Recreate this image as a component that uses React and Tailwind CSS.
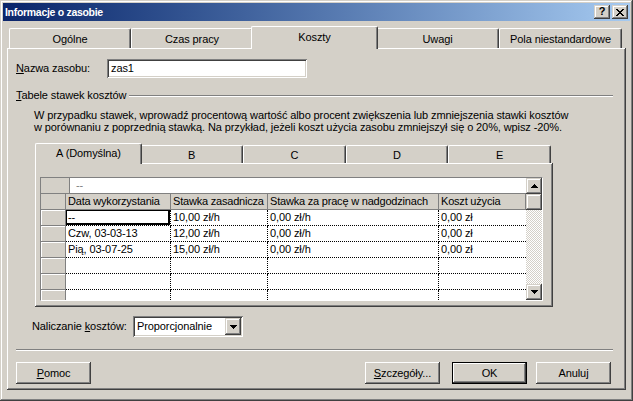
import React from 'react';

// classic 3D bevels
const raised = 'bg-[#D4D0C8] shadow-[inset_-1px_-1px_0_#404040,inset_1px_1px_0_#fff,inset_-2px_-2px_0_#808080]';
const raisedSoft = 'bg-[#D4D0C8] shadow-[inset_-1px_-1px_0_#404040,inset_1px_1px_0_#D4D0C8,inset_-2px_-2px_0_#808080,inset_2px_2px_0_#fff]';
const sunken = 'bg-white shadow-[inset_1px_1px_0_#808080,inset_-1px_-1px_0_#fff,inset_2px_2px_0_#404040,inset_-2px_-2px_0_#D4D0C8]';
const panel = 'bg-[#D4D0C8] shadow-[inset_-1px_-1px_0_#404040,inset_1px_1px_0_#fff,inset_-2px_-2px_0_#808080]';

const mainTabs = [
  { label: 'Ogólne', w: 'w-[122px]' },
  { label: 'Czas pracy', w: 'w-[122px]' },
  { label: 'Koszty', w: 'w-[127px]', active: true },
  { label: 'Uwagi', w: 'w-[123px]' },
  { label: 'Pola niestandardowe', w: 'w-[123px]' },
];

const rateTabs = [
  { label: 'A (Domyślna)', w: 'w-[107px]', active: true },
  { label: 'B', w: 'w-[103px]' },
  { label: 'C', w: 'w-[103px]' },
  { label: 'D', w: 'w-[102px]' },
  { label: 'E', w: 'w-[103px]' },
];

const rows = [
  ['--', '10,00 zł/h', '0,00 zł/h', '0,00 zł'],
  ['Czw, 03-03-13', '12,00 zł/h', '0,00 zł/h', '0,00 zł'],
  ['Pią, 03-07-25', '15,00 zł/h', '0,00 zł/h', '0,00 zł'],
  ['', '', '', ''],
  ['', '', '', ''],
  ['', '', '', ''],
];

const cols = [
  { label: 'Data wykorzystania', w: 'w-[105px]' },
  { label: 'Stawka zasadnicza', w: 'w-[97px]' },
  { label: 'Stawka za pracę w nadgodzinach', w: 'w-[171px]' },
  { label: 'Koszt użycia', w: 'w-[87px]' },
];

function Arrow({ up }) {
  const r = up ? [[3, 0, 1], [2, 1, 3], [1, 2, 5], [0, 3, 7]] : [[0, 0, 7], [1, 1, 5], [2, 2, 3], [3, 3, 1]];
  return (
    <svg width="7" height="4" viewBox="0 0 7 4" shapeRendering="crispEdges">
      {r.map(([x, y, w]) => <rect key={y} x={x} y={y} width={w} height="1" fill="#000" />)}
    </svg>
  );
}

function CloseGlyph() {
  const px = [[0, 1, 6, 7], [1, 2, 5, 6], [2, 3, 4, 5], [3, 4], [2, 3, 4, 5], [1, 2, 5, 6], [0, 1, 6, 7]];
  return (
    <svg width="8" height="7" viewBox="0 0 8 7" shapeRendering="crispEdges">
      {px.map((xs, y) => xs.map(x => <rect key={y + '-' + x} x={x} y={y} width="1" height="1" fill="#000" />))}
    </svg>
  );
}

function Tab({ label, w, active, tall }) {
  if (active) {
    return (
      <div className={`${w} ${tall ? 'h-[23px]' : 'h-[21px]'} -mx-[2px] -mb-[1px] relative z-10 bg-[#D4D0C8] border-t border-l border-white border-r border-r-[#404040] rounded-t-[2px] shadow-[inset_-1px_0_0_#808080] flex items-center justify-center pb-[1px]`}>
        {label}
      </div>
    );
  }
  return (
    <div className={`${w} ${tall ? 'h-[20px]' : 'h-[18px]'} bg-[#D4D0C8] border-t border-l border-white border-r border-r-[#404040] rounded-t-[2px] shadow-[inset_-1px_0_0_#808080] flex items-center justify-center pt-[1px]`}>
      {label}
    </div>
  );
}

function Button({ children, def }) {
  return (
    <div className={`w-[75px] h-[22px] flex items-center justify-center ${def ? 'bg-[#D4D0C8] shadow-[inset_0_0_0_1px_#000,inset_-2px_-2px_0_#404040,inset_2px_2px_0_#fff,inset_-3px_-3px_0_#808080]' : raised}`}>
      {children}
    </div>
  );
}

function RateGrid() {
  return (
    <div className="ml-[5px] mt-[14px] w-[503px] h-[124px] border border-t-[#808080] border-l-[#808080] border-r-white border-b-white flex">
      <div className="w-[485px] flex flex-col overflow-hidden">
        <div className="h-[16px] shrink-0 flex">
          <div className="w-[29px] bg-[#D4D0C8] border-r border-b border-[#808080]" />
          <div className="flex-1 bg-white border-b border-[#808080] pl-[6px] text-[#808080] flex items-center">--</div>
        </div>
        <div className="h-[16px] shrink-0 flex">
          <div className="w-[25px] bg-[#D4D0C8] border-r border-b border-[#808080]" />
          {cols.map(c => (
            <div key={c.label} className={`${c.w} bg-[#D4D0C8] border-r border-b border-[#808080] pl-[2px] flex items-center whitespace-nowrap overflow-hidden tracking-[-0.2px]`}>
              {c.label}
            </div>
          ))}
        </div>
        {rows.map((r, i) => (
          <div key={i} className="h-[16px] shrink-0 flex">
            <div className="w-[25px] bg-[#D4D0C8] border-r border-b border-[#808080] shadow-[inset_1px_1px_0_#fff]" />
            {r.map((v, j) => (
              <div
                key={j}
                className={`${cols[j].w} relative bg-white border-dotted border-black border-b ${j < 3 ? 'border-r' : ''} pl-[2px] flex items-center whitespace-nowrap`}
              >
                {v}
                {i === 0 && j === 0 && (
                  <div className="absolute left-0 top-0 right-0 bottom-0 border-l border-t border-r-2 border-b-2 border-black border-solid" />
                )}
              </div>
            ))}
          </div>
        ))}
      </div>
      <div className="w-[16px] flex flex-col">
        <div className={`h-[16px] ${raisedSoft} flex items-center justify-center`}><Arrow up /></div>
        <div className={`h-[16px] ${raisedSoft}`} />
        <div className="flex-1 bg-[repeating-conic-gradient(#fff_0%_25%,#D4D0C8_0%_50%)] bg-[length:2px_2px]" />
        <div className={`h-[16px] ${raisedSoft} flex items-center justify-center`}><Arrow /></div>
      </div>
    </div>
  );
}

export default function App() {
  return (
    <div className="w-[633px] h-[401px] bg-[#D4D0C8] p-[3px] flex flex-col overflow-hidden font-['Liberation_Sans',Arial,sans-serif] text-[11px] leading-[13px] tracking-[-0.1px] text-black shadow-[inset_-1px_-1px_0_#404040,inset_1px_1px_0_#D4D0C8,inset_-2px_-2px_0_#808080,inset_2px_2px_0_#fff]">
      {/* title bar */}
      <div className="h-[18px] shrink-0 flex items-center bg-linear-to-r from-[#0A246A] to-[#A6CAF0] px-[2px]">
        <span className="font-bold text-white text-[10.5px] tracking-[-0.3px]">Informacje o zasobie</span>
        <div className="ml-auto flex gap-[2px]">
          <div className={`w-[16px] h-[14px] ${raisedSoft} flex items-center justify-center font-bold text-[11px] leading-none pb-[1px]`}>?</div>
          <div className={`w-[16px] h-[14px] ${raisedSoft} flex items-center justify-center`}><CloseGlyph /></div>
        </div>
      </div>

      <div className="px-[4px] pt-[5px] flex flex-col">
        <div className="flex items-end h-[22px] pl-[2px]">
          {mainTabs.map(t => <Tab key={t.label} {...t} tall />)}
        </div>

        <div className={`h-[342px] ${panel} flex flex-col`}>
          <div className="mt-[11px] h-[19px] flex items-center pl-[9px]">
            <div className="w-[91px]"><span className="underline">N</span>azwa zasobu:</div>
            <div className={`w-[200px] h-[19px] ${sunken} flex items-center pl-[4px]`}>zas1</div>
          </div>

          <div className="mt-[11px] h-[13px] flex items-center pl-[9px] pr-[13px]">
            <span><span className="underline">T</span>abele stawek kosztów</span>
            <div className="flex-1 ml-[3px] h-[2px] border-t border-[#808080] border-b border-b-white" />
          </div>

          <div className="mt-[7px] pl-[27px] leading-[12px] whitespace-nowrap">
            <div>W przypadku stawek, wprowadź procentową wartość albo procent zwiększenia lub zmniejszenia stawki kosztów</div>
            <div>w porównaniu z poprzednią stawką. Na przykład, jeżeli koszt użycia zasobu zmniejszył się o 20%, wpisz -20%.</div>
          </div>

          <div className="mt-[10px] h-[20px] pl-[30px] flex items-end">
            {rateTabs.map(t => <Tab key={t.label} {...t} />)}
          </div>
          <div className={`ml-[28px] w-[518px] h-[144px] ${panel} flex flex-col`}>
            <RateGrid />
          </div>

          <div className="mt-[9px] h-[21px] pl-[25px] flex items-center">
            <div className="w-[101px]">Naliczanie <span className="underline">k</span>osztów:</div>
            <div className={`w-[110px] h-[21px] ${sunken} flex items-center pl-[4px] pr-[2px]`}>
              <span className="flex-1">Proporcjonalnie</span>
              <div className={`w-[16px] h-[17px] ${raisedSoft} flex items-center justify-center`}><Arrow /></div>
            </div>
          </div>

          <div className="mt-[12px] ml-[9px] mr-[13px] h-[2px] border-t border-[#808080] border-b border-b-white" />

          <div className="mt-[11px] flex pl-[9px] pr-[15px]">
            <Button><span><span className="underline">P</span>omoc</span></Button>
            <div className="ml-auto flex">
              <Button><span><span className="underline">S</span>zczegóły...</span></Button>
              <div className="ml-[12px]"><Button def>OK</Button></div>
              <div className="ml-[9px]"><Button>Anuluj</Button></div>
            </div>
          </div>
        </div>
      </div>
    </div>
  );
}
